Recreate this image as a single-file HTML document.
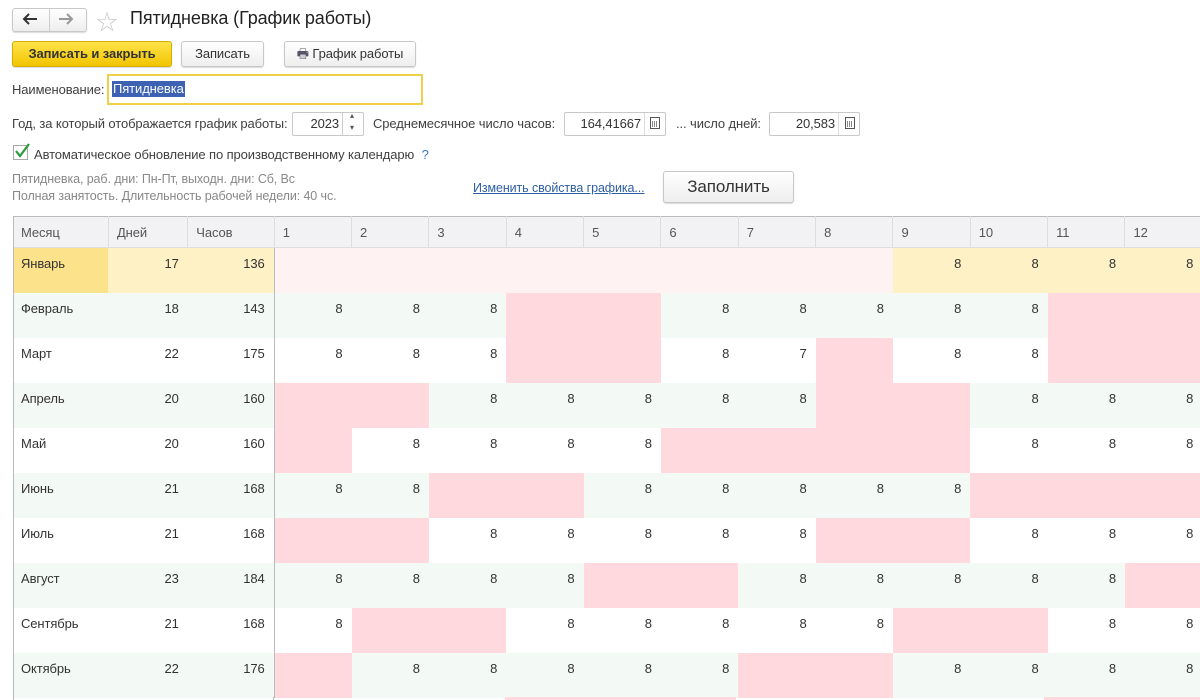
<!DOCTYPE html>
<html><head><meta charset="utf-8"><style>
*{box-sizing:border-box;margin:0;padding:0}
html,body{width:1200px;height:700px;overflow:hidden}
body{background:#fff;font-family:"Liberation Sans","Noto Sans CJK SC",sans-serif;font-size:13px;color:#404040;position:relative;letter-spacing:-0.1px}
.a{position:absolute;white-space:nowrap}
.btn{position:absolute;height:26px;border:1px solid #c8c8c8;border-radius:3px;background:linear-gradient(#fff,#eee);box-shadow:0 1px 1px rgba(0,0,0,.15);font-size:13px;color:#333;text-align:center;line-height:24px}
.inp{position:absolute;height:24px;border:1px solid #c8c8c8;border-radius:2px;background:#fff;text-align:right;line-height:22px;padding-right:4px;color:#333;font-size:13px}
.calc{position:absolute;width:10px;height:12px;border:1px solid #555;background:repeating-linear-gradient(90deg,#fff 0 1px,#888 1px 2px);background-clip:content-box;padding:3px 1px 1px 1px}
table{position:absolute;left:13px;top:216px;border-collapse:collapse;table-layout:fixed;width:1200px}
th{height:31px;background:#f2f2f4;font-weight:normal;text-align:left;padding-left:8px;color:#555;border-right:1px solid #ddd;border-top:1px solid #bbb;border-bottom:1px solid #ddd}
td{height:45px;vertical-align:top;padding-top:8px;text-align:right;padding-right:9px;color:#333}
td.m{text-align:left;padding-left:8px}
tr.g td{background:#f3f9f4}
td.p{background:#ffd9dd!important}
td.hp{background:#fff2f3}
td.y{background:#fdf1c5}
td.yy{background:#fde28c}
td.c3{border-right:1px solid #bbb}
</style></head><body>
<div class="btn" style="left:12px;top:8px;width:75px;height:24px"></div>
<div class="a" style="left:49px;top:9px;width:1px;height:22px;background:#ccc"></div>
<svg class="a" style="left:22px;top:13px" width="16" height="12"><path d="M15 6H3M7 1L2 6l5 5" stroke="#333" stroke-width="2" fill="none"/></svg>
<svg class="a" style="left:58px;top:13px" width="16" height="12"><path d="M1 6h12M9 1l5 5-5 5" stroke="#999" stroke-width="2" fill="none"/></svg>
<div class="a" style="left:96px;top:5px;font-size:22px;color:#ccc">☆</div>
<div class="a" style="left:130px;top:8px;font-size:18px;color:#222">Пятидневка (График работы)</div>
<div class="btn" style="left:12px;top:41px;width:160px;background:linear-gradient(#ffe34a,#f2c500);border-color:#d4ae00;font-weight:bold;color:#333">Записать и закрыть</div>
<div class="btn" style="left:181px;top:41px;width:83px">Записать</div>
<div class="btn" style="left:284px;top:41px;width:132px"><span style="color:#556">&#128438;</span> График работы</div>
<div class="a" style="left:12px;top:82px">Наименование:</div>
<div class="a" style="left:107px;top:74px;width:316px;height:31px;border:2px solid #f0cf4a;background:#fff"></div>
<div class="a" style="left:112px;top:81px;background:#3d62b3;color:#fff;padding:0 1px;line-height:16px">Пятидневка</div>
<div class="a" style="left:12px;top:116px">Год, за который отображается график работы:</div>
<div class="inp" style="left:292px;top:112px;width:72px;padding-right:24px">2023</div>
<div class="a" style="left:342px;top:113px;width:1px;height:22px;background:#ccc"></div>
<div class="a" style="left:350px;top:111px;font-size:8px;color:#555">▴</div>
<div class="a" style="left:350px;top:123px;font-size:8px;color:#555">▾</div>
<div class="a" style="left:373px;top:116px">Среднемесячное число часов:</div>
<div class="inp" style="left:564px;top:112px;width:102px;padding-right:24px">164,41667</div>
<div class="a" style="left:644px;top:113px;width:1px;height:22px;background:#ddd"></div>
<div class="calc" style="left:650px;top:117px"></div>
<div class="a" style="left:676px;top:116px">... число дней:</div>
<div class="inp" style="left:769px;top:112px;width:91px;padding-right:24px">20,583</div>
<div class="a" style="left:838px;top:113px;width:1px;height:22px;background:#ddd"></div>
<div class="calc" style="left:845px;top:117px"></div>
<div class="a" style="left:13px;top:145px;width:15px;height:15px;border:1px solid #aaa;background:#fff"></div>
<svg class="a" style="left:14px;top:143px" width="16" height="16"><path d="M2 8l4 5 9-12" stroke="#2a9a3a" stroke-width="2.2" fill="none"/></svg>
<div class="a" style="left:34px;top:147px">Автоматическое обновление по производственному календарю <span style="color:#3a78b5;margin-left:4px">?</span></div>
<div class="a" style="left:12px;top:172px;color:#888;font-size:12.5px">Пятидневка, раб. дни: Пн-Пт, выходн. дни: Сб, Вс</div>
<div class="a" style="left:12px;top:189px;color:#888;font-size:12.5px">Полная занятость. Длительность рабочей недели: 40 чс.</div>
<div class="a" style="left:473px;top:181px;color:#2e5fa3;text-decoration:underline;font-size:12.5px">Изменить свойства графика...</div>
<div class="btn" style="left:663px;top:171px;width:131px;height:32px;line-height:30px;font-size:17px">Заполнить</div>
<table>
<colgroup><col style="width:95px"><col style="width:79px"><col style="width:86px"><col style="width:77px"><col style="width:77px"><col style="width:77px"><col style="width:77px"><col style="width:77px"><col style="width:77px"><col style="width:77px"><col style="width:77px"><col style="width:77px"><col style="width:77px"><col style="width:77px"><col style="width:77px"><col style="width:10px"></colgroup>
<tr><th>Месяц</th><th>Дней</th><th>Часов</th><th>1</th><th>2</th><th>3</th><th>4</th><th>5</th><th>6</th><th>7</th><th>8</th><th>9</th><th>10</th><th>11</th><th>12</th><th></th></tr>
<tr><td class="m yy">Январь</td><td class="y">17</td><td class="y c3">136</td><td class="hp"></td><td class="hp"></td><td class="hp"></td><td class="hp"></td><td class="hp"></td><td class="hp"></td><td class="hp"></td><td class="hp"></td><td class="y">8</td><td class="y">8</td><td class="y">8</td><td class="y">8</td><td></td></tr>
<tr class="g"><td class="m">Февраль</td><td>18</td><td class="c3">143</td><td>8</td><td>8</td><td>8</td><td class="p"></td><td class="p"></td><td>8</td><td>8</td><td>8</td><td>8</td><td>8</td><td class="p"></td><td class="p"></td><td class="p"></td></tr>
<tr><td class="m">Март</td><td>22</td><td class="c3">175</td><td>8</td><td>8</td><td>8</td><td class="p"></td><td class="p"></td><td>8</td><td>7</td><td class="p"></td><td>8</td><td>8</td><td class="p"></td><td class="p"></td><td class="p"></td></tr>
<tr class="g"><td class="m">Апрель</td><td>20</td><td class="c3">160</td><td class="p"></td><td class="p"></td><td>8</td><td>8</td><td>8</td><td>8</td><td>8</td><td class="p"></td><td class="p"></td><td>8</td><td>8</td><td>8</td><td></td></tr>
<tr><td class="m">Май</td><td>20</td><td class="c3">160</td><td class="p"></td><td>8</td><td>8</td><td>8</td><td>8</td><td class="p"></td><td class="p"></td><td class="p"></td><td class="p"></td><td>8</td><td>8</td><td>8</td><td></td></tr>
<tr class="g"><td class="m">Июнь</td><td>21</td><td class="c3">168</td><td>8</td><td>8</td><td class="p"></td><td class="p"></td><td>8</td><td>8</td><td>8</td><td>8</td><td>8</td><td class="p"></td><td class="p"></td><td class="p"></td><td class="p"></td></tr>
<tr><td class="m">Июль</td><td>21</td><td class="c3">168</td><td class="p"></td><td class="p"></td><td>8</td><td>8</td><td>8</td><td>8</td><td>8</td><td class="p"></td><td class="p"></td><td>8</td><td>8</td><td>8</td><td></td></tr>
<tr class="g"><td class="m">Август</td><td>23</td><td class="c3">184</td><td>8</td><td>8</td><td>8</td><td>8</td><td class="p"></td><td class="p"></td><td>8</td><td>8</td><td>8</td><td>8</td><td>8</td><td class="p"></td><td class="p"></td></tr>
<tr><td class="m">Сентябрь</td><td>21</td><td class="c3">168</td><td>8</td><td class="p"></td><td class="p"></td><td>8</td><td>8</td><td>8</td><td>8</td><td>8</td><td class="p"></td><td class="p"></td><td>8</td><td>8</td><td></td></tr>
<tr class="g"><td class="m">Октябрь</td><td>22</td><td class="c3">176</td><td class="p"></td><td>8</td><td>8</td><td>8</td><td>8</td><td>8</td><td class="p"></td><td class="p"></td><td>8</td><td>8</td><td>8</td><td>8</td><td></td></tr>
</table>
<div class="a" style="left:505px;top:697px;width:231px;height:3px;background:#ffd9dd"></div>
<div class="a" style="left:1044px;top:697px;width:156px;height:3px;background:#ffd9dd"></div>
<div class="a" style="left:273px;top:697px;width:1px;height:3px;background:#bbb"></div>
<div class="a" style="left:13px;top:216px;width:1px;height:484px;background:#bbb"></div>
</body></html>
